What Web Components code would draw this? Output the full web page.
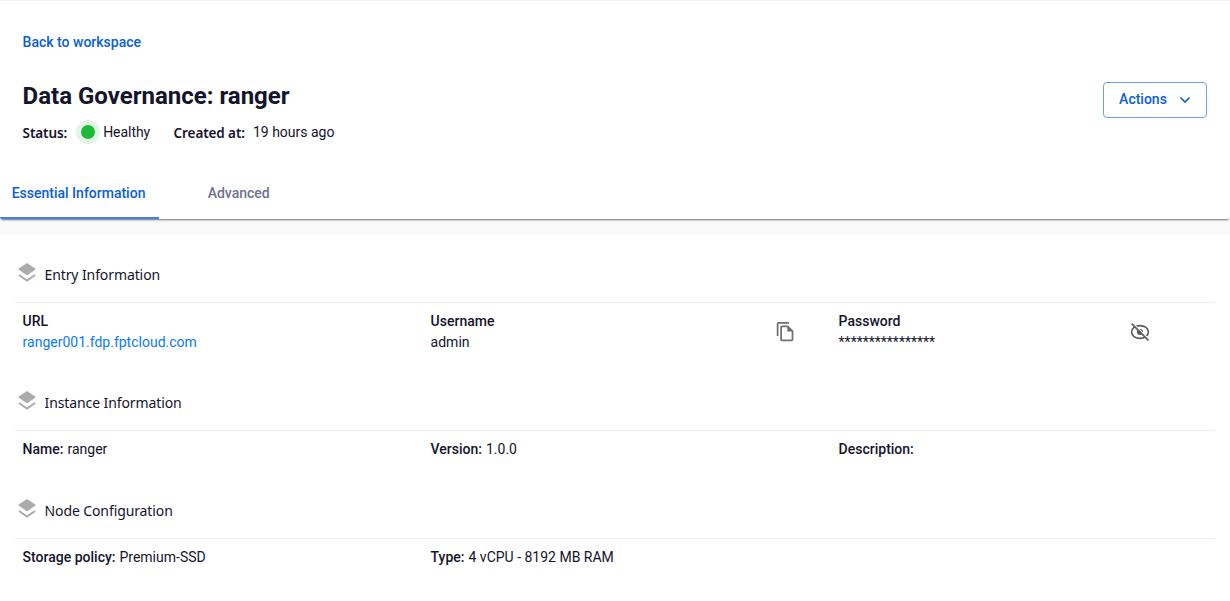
<!DOCTYPE html>
<html><head><meta charset="utf-8"><style>
html,body{margin:0;padding:0;background:#fff;height:601px;overflow:hidden}
body{font-family:Roboto,sans-serif;color:#14142b}
</style></head><body>
<page-header></page-header>
<tab-bar></tab-bar>
<info-section title="Entry Information">
  <info-cell><span slot="label">URL</span><a href="#" style="color:#0a7cf0;text-decoration:none;font:14px Roboto,sans-serif">ranger001.fdp.fptcloud.com</a></info-cell>
  <info-cell icon="copy"><span slot="label">Username</span>admin</info-cell>
  <info-cell icon="eye"><span slot="label">Password</span>****************</info-cell>
</info-section>
<info-section title="Instance Information">
  <inline-field label="Name:">ranger</inline-field>
  <inline-field label="Version:">1.0.0</inline-field>
  <inline-field label="Description:"></inline-field>
</info-section>
<info-section title="Node Configuration">
  <inline-field label="Storage policy:">Premium-SSD</inline-field>
  <inline-field label="Type:">4 vCPU - 8192 MB RAM</inline-field>
</info-section>
<script>
customElements.define('page-header',class extends HTMLElement{constructor(){super();this.attachShadow({mode:'open'}).innerHTML=`<style>
:host{display:block;border-top:1px solid #f3f3f3;padding:0 23px 0 22.6px;height:169px;box-sizing:border-box}
a{display:block;padding-top:33px;font:500 14px/16px Roboto,sans-serif;color:#0b5ed7;text-decoration:none}
.row{display:flex;justify-content:space-between;align-items:flex-start}
h1{margin:30px 0 0;font:700 24px/32px Roboto,sans-serif;color:#14142b}
.meta{display:flex;align-items:center;height:26px;margin-top:7px;font:14px/20px Roboto,sans-serif;color:#14142b}
b{font:600 13.5px/20px "Noto Sans",sans-serif;letter-spacing:-.1px;padding-top:2px}
.dot{box-sizing:content-box;width:14px;height:14px;border-radius:50%;background:#1fb93a;border:5px solid #e3f5e6;margin:0 3px 0 9px}
.c{margin-left:23.4px}.v{margin-left:8px}
.h{letter-spacing:-.05px}
button{margin-top:32px;width:104px;height:36px;background:#fff;border:1px solid #6d9fe8;border-radius:4px;color:#0b5ed7;font:500 14px Roboto,sans-serif;display:flex;align-items:center;justify-content:center;gap:12px;padding:0 0 2px;box-sizing:border-box}
svg{margin-top:2px}
</style><a href="#">Back to workspace</a>
<div class="row"><div><h1>Data Governance: ranger</h1>
<div class="meta"><b>Status:</b><span class="dot"></span><span class="h">Healthy</span><b class="c">Created at:</b><span class="v">19 hours ago</span></div></div>
<button>Actions <svg width="12" height="8" viewBox="0 0 12 8" fill="none" stroke="#0b5ed7" stroke-width="1.6"><path d="M1.5 1.5 6 6l4.5-4.5"/></svg></button></div>`}});
customElements.define('tab-bar',class extends HTMLElement{constructor(){super();this.attachShadow({mode:'open'}).innerHTML=`<style>
:host{display:block;height:66px;box-sizing:border-box;background:#f9f9f9;padding-bottom:15px}
.bar{display:flex;height:50px;background:#fff;box-shadow:0 2px 2px -1px rgba(0,0,0,.55);border-radius:0 0 3px 3px}
.t{font:500 14px/16px Roboto,sans-serif;padding:16px 0 0 11.7px;height:50px;box-sizing:border-box}
.a{color:#0b5ed7;width:159px;border-bottom:2px solid #3d84ea;border-radius:0 0 0 2px}
.i{color:#6e7191;margin-left:37px}
</style><div class="bar"><div class="t a">Essential Information</div><div class="t i">Advanced</div></div>`}});
customElements.define('info-section',class extends HTMLElement{constructor(){super();this.attachShadow({mode:'open'}).innerHTML=`<style>
:host{display:block;padding:0 15px}
.h{display:flex;align-items:center;height:68px;padding:13px 0 0 3px;box-sizing:border-box;border-bottom:1px solid #ececec;gap:8.5px;font:14px/20px "Noto Sans",sans-serif;letter-spacing:-.1px;color:#14142b}
.g{display:grid;grid-template-columns:repeat(3,408px);padding:0 7.6px}
svg{margin-top:-5px}
</style><div class="h"><svg width="18" height="20" viewBox="0 0 18 20"><path fill="#ababab" d="M9 0 18 6 9 12.5 0 6z"/><path fill="none" stroke="#ababab" stroke-width="2" d="M1 12l8 5.5 8-5.5"/></svg><span id="t"></span></div><div class="g"><slot></slot></div>`}
connectedCallback(){this.shadowRoot.getElementById('t').textContent=this.getAttribute('title');this.removeAttribute('title')}});
const ICONS={copy:'<svg width="21" height="21" viewBox="0 0 24 24" fill="#707070"><path d="M16 1H4c-1.1 0-2 .9-2 2v14h2V3h12V1zm-1 4H8c-1.1 0-1.99.9-1.99 2L6 21c0 1.1.89 2 1.99 2H19c1.1 0 2-.9 2-2V11l-6-6zM8 21V7h6v5h5v9H8z"/></svg>',
eye:'<svg style="margin-top:1px" width="20" height="20" viewBox="0 0 20 20" fill="none" stroke="#5a5a5a" stroke-width="1.6"><ellipse cx="10" cy="10" rx="8.4" ry="6.4"/><circle cx="10" cy="10" r="3" fill="#5a5a5a" stroke="none"/><path d="M3.6 2.4 17.6 16.4" stroke-width="2" stroke="#fff"/><path d="M1.6 1.6 18.4 18.4"/></svg>'};
customElements.define('info-cell',class extends HTMLElement{constructor(){super();this.attachShadow({mode:'open'}).innerHTML=`<style>
:host{display:block;padding-top:8px;height:60px;box-sizing:border-box;font:14px/20px Roboto,sans-serif;color:#14142b}
.r{display:flex}.b{flex:none;width:344.5px}
.l{font-weight:500;height:20px;margin-bottom:1px}
#i{margin-top:10px;line-height:0}
</style><div class="r"><div class="b"><div class="l"><slot name="label"></slot></div><slot></slot></div><div id="i"></div></div>`}
connectedCallback(){const k=this.getAttribute('icon');if(k)this.shadowRoot.getElementById('i').innerHTML=ICONS[k];
if(k==='eye')this.shadowRoot.querySelector('.b').style.width='291.5px'}});
customElements.define('inline-field',class extends HTMLElement{constructor(){super();this.attachShadow({mode:'open'}).innerHTML=`<style>
:host{display:block;padding-top:8px;height:40px;box-sizing:border-box;font:14px/20px Roboto,sans-serif;color:#14142b}
b{font-weight:500;margin-right:.5px}
</style><b id="l"></b> <slot></slot>`}
connectedCallback(){this.shadowRoot.getElementById('l').textContent=this.getAttribute('label')}});
</script>
</body></html>
